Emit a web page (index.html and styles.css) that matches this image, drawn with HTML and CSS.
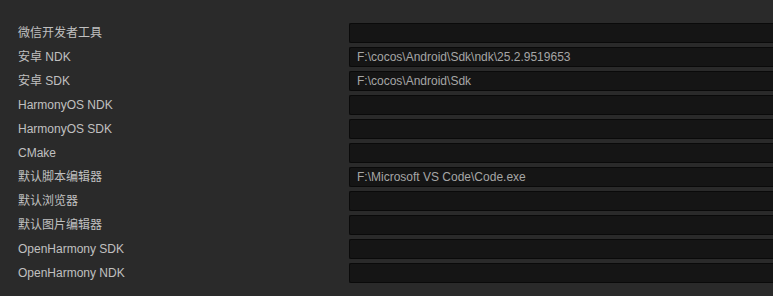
FILE: index.html
```html
<!DOCTYPE html>
<html lang="zh-CN">
<head>
    <meta charset="UTF-8">
    <meta name="viewport" content="width=device-width, initial-scale=1.0">
    <title>外部程序</title>
    <link rel="stylesheet" href="styles.css">
</head>
<body>
    <div class="settings">
        <label class="label">微信开发者工具</label>
        <div class="field"></div>

        <label class="label">安卓 NDK</label>
        <div class="field">F:\cocos\Android\Sdk\ndk\25.2.9519653</div>

        <label class="label">安卓 SDK</label>
        <div class="field">F:\cocos\Android\Sdk</div>

        <label class="label">HarmonyOS NDK</label>
        <div class="field"></div>

        <label class="label">HarmonyOS SDK</label>
        <div class="field"></div>

        <label class="label">CMake</label>
        <div class="field"></div>

        <label class="label">默认脚本编辑器</label>
        <div class="field">F:\Microsoft VS Code\Code.exe</div>

        <label class="label">默认浏览器</label>
        <div class="field"></div>

        <label class="label">默认图片编辑器</label>
        <div class="field"></div>

        <label class="label">OpenHarmony SDK</label>
        <div class="field"></div>

        <label class="label">OpenHarmony NDK</label>
        <div class="field"></div>
    </div>
</body>
</html>
```

FILE: styles.css
```css
html, body {
    margin: 0;
    height: 100%;
    overflow: hidden;
}
body {
    font-family: 'Liberation Sans', 'Noto Sans CJK SC', sans-serif;
    font-size: 12px;
    background-color: #2a2a2a;
    color: #c0c0c0;
}
.settings {
    display: grid;
    grid-template-columns: 331px 440px;
    row-gap: 4px;
    padding: 23px 0 0 18px;
}
.label {
    display: block;
    height: 20px;
    line-height: 20px;
    white-space: nowrap;
}
.field {
    box-sizing: border-box;
    height: 20px;
    line-height: 18px;
    padding: 0 7px;
    background-color: #151515;
    border: 1px solid #0a0a0a;
    border-right: none;
    border-radius: 2px 0 0 2px;
    color: #a6a6a6;
    white-space: nowrap;
}
```
